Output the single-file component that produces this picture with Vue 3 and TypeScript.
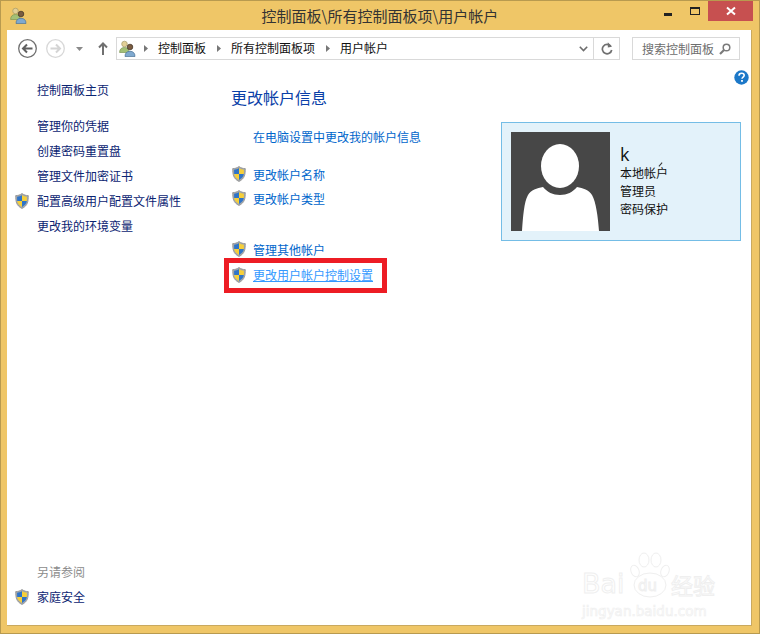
<script setup lang="ts">
const crumbs = ['控制面板', '所有控制面板项', '用户帐户']
const sideLinks = [
  { text: '管理你的凭据', shield: false },
  { text: '创建密码重置盘', shield: false },
  { text: '管理文件加密证书', shield: false },
  { text: '配置高级用户配置文件属性', shield: true },
  { text: '更改我的环境变量', shield: false },
]
const cardLines = ['本地帐户', '管理员', '密码保护']
</script>

<template>
  <div class="window">
    <svg width="0" height="0" class="defs">
      <defs>
        <symbol id="shield" viewBox="0 0 14 16">
          <path d="M7 .5C5 2 3 2.600.7 2.600c0 5.600.4 10 6.300 12.900 5.900-2.900 6.300-7.300 6.300-12.900C11 2.600 9 2 7 .5z" fill="#a4a9ad" stroke="#8f8f8f" stroke-width=".8" />
          <path d="M7 2.300V8H2.200c-.1-1.400-.1-2.500-.1-4.200C3.900 3.700 5.500 3.200 7 2.300z" fill="#2f74c8" />
          <path d="M7 2.300c1.500.9 3.100 1.400 4.900 1.500 0 1.700 0 2.800-.1 4.200H7z" fill="#f6cf3a" />
          <path d="M2.200 8H7v5.900C3.800 12.200 2.500 10.400 2.200 8z" fill="#f6cf3a" />
          <path d="M11.800 8H7v5.900c3.200-1.700 4.500-3.500 4.800-5.900z" fill="#2f74c8" />
        </symbol>
        <symbol id="users" viewBox="0 0 17 17">
          <circle cx="5.500" cy="4" r="2.800" fill="#e2cf96" stroke="#a39a68" stroke-width=".7" />
          <path d="M.6 12.500c0-3.500 2-5 4.900-5s4.500 1.500 4.500 5z" fill="#a3c076" stroke="#7d9656" stroke-width=".7" />
          <circle cx="11" cy="7" r="2.800" fill="#7a5c40" stroke="#3e3024" stroke-width=".7" />
          <path d="M6 16.500c0-3.600 2-5.200 5-5.200s5 1.600 5 5.200z" fill="#7fa9cf" stroke="#4c7397" stroke-width=".7" />
        </symbol>
      </defs>
    </svg>

    <header class="titlebar">
      <svg class="title-icon" width="17" height="17"><use href="#users" /></svg>
      <span class="title">控制面板\所有控制面板项\用户帐户</span>
      <div class="controls">
        <span class="ctl-min"></span>
        <span class="ctl-max"></span>
        <span class="ctl-close">
          <svg width="10" height="10" viewBox="0 0 10 10"><path d="M1 1.500l8 7M9 1.500l-8 7" stroke="#fff" stroke-width="2" /></svg>
        </span>
      </div>
    </header>

    <div class="client">
      <div class="toolbar">
        <svg class="nav" width="19" height="19" viewBox="0 0 19 19">
          <circle cx="9.500" cy="9.500" r="8.800" fill="none" stroke="#707070" stroke-width="1.300" />
          <path d="M14.500 9.500H5.500M9 5.500l-4 4 4 4" fill="none" stroke="#5f5f5f" stroke-width="2" />
        </svg>
        <svg class="nav nav-fwd" width="19" height="19" viewBox="0 0 19 19">
          <circle cx="9.500" cy="9.500" r="8.800" fill="none" stroke="#d8d8d8" stroke-width="1.300" />
          <path d="M4.500 9.500h9M10 5.500l4 4-4 4" fill="none" stroke="#d4d4d4" stroke-width="2" />
        </svg>
        <svg class="nav nav-drop" width="7" height="4" viewBox="0 0 7 4"><path d="M0 0h7L3.500 4z" fill="#8a8a8a" /></svg>
        <svg class="nav nav-up" width="10" height="13" viewBox="0 0 10 13">
          <path d="M5 13V1.500M1 5.500l4-4 4 4" fill="none" stroke="#707070" stroke-width="2" />
        </svg>
        <div class="address">
          <svg class="addr-icon" width="17" height="17"><use href="#users" /></svg>
          <template v-for="c in crumbs" :key="c">
            <svg class="crumb-arrow" width="4" height="7" viewBox="0 0 4 7"><path d="M0 0l4 3.500L0 7z" fill="#777" /></svg>
            <span class="crumb">{{ c }}</span>
          </template>
          <svg class="addr-chev" width="9" height="6" viewBox="0 0 9 6"><path d="M.8.800l3.700 3.700L8.200.800" fill="none" stroke="#6d6d6d" stroke-width="1.600" /></svg>
          <span class="addr-refresh">
            <svg width="12" height="13" viewBox="0 0 12 13">
              <path d="M9.800 4.200A4.700 4.700 0 1 0 10.700 8" fill="none" stroke="#707070" stroke-width="1.700" />
              <path d="M6.800 .2v5.200l4.200-.7z" fill="#707070" />
            </svg>
          </span>
        </div>
        <div class="search">
          <span>搜索控制面板</span>
          <svg width="12" height="12" viewBox="0 0 12 12">
            <circle cx="7.500" cy="4.500" r="3.300" fill="none" stroke="#7a7a7a" stroke-width="1.500" />
            <path d="M5 7L1 11" stroke="#7a7a7a" stroke-width="2.200" />
          </svg>
        </div>
      </div>

      <div class="help-row">
        <svg width="15" height="15" viewBox="0 0 15 15">
          <circle cx="7.500" cy="7.500" r="7.200" fill="#1c78c8" />
          <path d="M5 5.700c0-1.600 1.100-2.500 2.600-2.500s2.600.9 2.600 2.100c0 1.700-2.200 1.800-2.200 3.500" fill="none" stroke="#fff" stroke-width="1.600" />
          <rect x="7.100" y="10" width="1.800" height="1.800" fill="#fff" />
        </svg>
      </div>

      <div class="content">
        <aside class="sidebar">
          <div class="side-main">
            <a class="side-home">控制面板主页</a>
            <a v-for="l in sideLinks" :key="l.text" class="side-link">
              <svg v-if="l.shield" class="shield" width="14" height="16"><use href="#shield" /></svg>
              <span v-else class="shield"></span>
              {{ l.text }}
            </a>
          </div>
          <div class="side-foot">
            <div class="see-also">另请参阅</div>
            <a class="side-link">
              <svg class="shield" width="14" height="16"><use href="#shield" /></svg>
              家庭安全
            </a>
          </div>
        </aside>

        <main class="main">
          <h1 class="heading">更改帐户信息</h1>
          <a class="pc-link">在电脑设置中更改我的帐户信息</a>
          <a class="m-link first"><svg class="shield" width="14" height="16"><use href="#shield" /></svg>更改帐户名称</a>
          <a class="m-link"><svg class="shield" width="14" height="16"><use href="#shield" /></svg>更改帐户类型</a>
          <a class="m-link other"><svg class="shield" width="14" height="16"><use href="#shield" /></svg>管理其他帐户</a>
          <div class="marked">
            <a class="m-link hot"><svg class="shield" width="14" height="16"><use href="#shield" /></svg><span>更改用户帐户控制设置</span></a>
          </div>
        </main>

        <section class="card">
          <svg class="avatar" width="99" height="99" viewBox="0 0 99 99">
            <rect width="99" height="99" fill="#474747" />
            <ellipse cx="49" cy="34" rx="19" ry="22" fill="#fff" />
            <path d="M11 99C12 85 13 70 17 63 20 58 26 56 32 55 36 60 42 63 49 63 56 63 62 60 66 55 72 56 78 58 81 63 85 70 87 85 88 99z" fill="#fff" />
          </svg>
          <div class="card-text">
            <div class="card-name">k</div>
            <div v-for="c in cardLines" :key="c" class="card-line">{{ c }}</div>
            <i class="tick"></i>
          </div>
        </section>
      </div>

      <div class="watermark">
        <svg class="paw" width="40" height="46" viewBox="0 0 40 46">
          <g fill="#fff" stroke="#efefef" stroke-width="1">
            <ellipse cx="5" cy="19" rx="4" ry="6" transform="rotate(-20 5 19)" />
            <ellipse cx="14" cy="8" rx="5" ry="7" />
            <ellipse cx="26" cy="8" rx="5" ry="7" />
            <ellipse cx="35" cy="19" rx="4" ry="6" transform="rotate(20 35 19)" />
            <ellipse cx="20" cy="33" rx="16" ry="12" />
          </g>
        </svg>
        <span class="wm-bai">Bai</span>
        <span class="wm-du">du</span>
        <span class="wm-jy">经验</span>
        <span class="wm-url">jingyan.baidu.com</span>
      </div>
    </div>
  </div>
</template>

<style scoped>
.window {
  position: relative;
  width: 760px;
  height: 634px;
  box-sizing: border-box;
  border: 1px solid #b89a4f;
  background: #efc667;
  display: flex;
  flex-direction: column;
  overflow: hidden;
  font-family: "Noto Sans CJK SC", "Noto Sans", sans-serif;
  font-size: 12px;
  color: #000;
}
.defs { position: absolute; }
a { display: flex; align-items: center; cursor: pointer; }

.titlebar {
  position: relative;
  height: 29px;
  flex: none;
  display: flex;
  align-items: center;
  justify-content: center;
}
.title { font-size: 15px; color: #333; line-height: 29px; white-space: nowrap; }
.title-icon { position: absolute; left: 9px; top: 6px; }
.controls { position: absolute; right: 6px; top: 0; display: flex; align-items: flex-start; }
.ctl-min { width: 8px; height: 3px; background: #222; margin: 12px 18px 0 0; }
.ctl-max { border: 1px solid #222; border-top-width: 2px; box-sizing: border-box; width: 10px; height: 8px; margin: 6px 8px 0 0; }
.ctl-close {
  width: 45px; height: 20px; background: #c75050;
  display: flex; align-items: center; justify-content: center;
}

.client {
  position: relative;
  flex: 1;
  margin: 0 7px 7px 6px;
  background: #fff;
  border-right: 1px solid #c9a95f;
  border-bottom: 1px solid #c9a95f;
  display: flex;
  flex-direction: column;
  min-height: 0;
}
.toolbar {
  height: 23px;
  margin-top: 7px;
  display: flex;
  align-items: center;
  flex: none;
}
.nav { flex: none; }
.toolbar > .nav:first-child { margin-left: 11px; }
.nav-fwd { margin-left: 9px; }
.nav-drop { margin-left: 11px; }
.nav-up { margin-left: 15px; }
.address {
  margin-left: 8px;
  width: 504px;
  height: 23px;
  box-sizing: border-box;
  border: 1px solid #d9d9d9;
  display: flex;
  align-items: center;
  font-size: 12px;
}
.addr-icon { margin: 0 -3px 0 2px; flex: none; }
.crumb-arrow { flex: none; margin: 0 10px 0 11px; }
.crumb { white-space: nowrap; color: #111; padding-bottom: 3px; }
.addr-chev { margin-left: auto; margin-right: 5px; }
.addr-refresh {
  width: 25px; height: 21px;
  border-left: 1px solid #d9d9d9;
  display: flex; align-items: center; justify-content: center;
}
.search {
  margin-left: 12px;
  width: 108px;
  height: 23px;
  box-sizing: border-box;
  border: 1px solid #d9d9d9;
  display: flex;
  align-items: center;
  justify-content: space-between;
  padding: 0 8px 0 9px;
  color: #6d6d6d;
}
.search span { padding-bottom: 1px; }

.help-row {
  position: absolute;
  right: 2px;
  top: 40px;
  line-height: 0;
}

.content { flex: 1; display: flex; min-height: 0; }
.sidebar {
  width: 224px;
  flex: none;
  padding: 17px 0 16px 8px;
  box-sizing: border-box;
  display: flex;
  flex-direction: column;
  justify-content: space-between;
}
.side-home { margin-left: 22px; height: 25px; margin-bottom: 11px; color: #0b2472; }
.side-link { height: 25px; color: #0b2472; white-space: nowrap; }
.shield { width: 14px; height: 16px; flex: none; margin-right: 8px; }
.see-also { margin-left: 22px; height: 25px; line-height: 25px; color: #8c8c8c; }

.main {
  width: 270px;
  flex: none;
  padding-top: 25px;
  display: flex;
  flex-direction: column;
  box-sizing: border-box;
}
.heading {
  margin: 0;
  font-size: 16px;
  font-weight: 400;
  color: #0a3fa8;
  line-height: 24px;
}
.pc-link { margin: 17px 0 0 22px; height: 20px; color: #0066cc; }
.m-link { height: 24px; color: #0066cc; padding-left: 1px; white-space: nowrap; }
.m-link .shield { margin-right: 7px; }
.m-link.first { margin-top: 16px; }
.m-link.other { margin-top: 27px; }
.marked {
  margin: 0 0 0 -7px;
  width: 163px;
  height: 35px;
  box-sizing: border-box;
  border: 5px solid #ed1c24;
  padding: 0 0 2px 2px;
  margin-top: -3px;
  display: flex;
  align-items: center;
}
.hot { color: #3399ff; }
.hot span { text-decoration: underline; }

.card {
  margin-top: 62px;
  width: 240px;
  height: 119px;
  box-sizing: border-box;
  border: 1px solid #74bde6;
  background: #e3f2fa;
  padding: 9px;
  display: flex;
  flex: none;
}
.avatar { flex: none; }
.card-text { position: relative; margin-left: 10px; padding-top: 13px; }
.card-name { font-size: 18px; line-height: 19px; color: #111; font-family: "Open Sans", sans-serif; }
.card-line { line-height: 18px; color: #111; white-space: nowrap; }
.tick {
  position: absolute; left: 38px; top: 32px;
  width: 5px; height: 1px; background: #333; transform: rotate(-50deg);
}

.watermark {
  position: absolute;
  left: 0; top: 0; right: 0; bottom: 0;
  pointer-events: none;
  font-family: "DejaVu Sans", sans-serif;
  color: #fff;
}
.watermark span { position: absolute; -webkit-text-stroke: 1px #efefef; white-space: nowrap; }
.paw { position: absolute; left: 623px; top: 522px; }
.wm-bai { left: 575px; top: 538px; font-size: 27px; line-height: 32px; }
.wm-du { left: 631px; top: 546px; font-size: 15px; line-height: 20px; }
.wm-jy { left: 664px; top: 541px; font-size: 22px; line-height: 26px; font-family: "Noto Sans CJK SC", sans-serif; }
.wm-url { left: 575px; top: 572px; font-size: 13.500px; line-height: 18px; -webkit-text-stroke-width: .7px !important; }
</style>

<style>
html, body { margin: 0; background: #fff; }
</style>
